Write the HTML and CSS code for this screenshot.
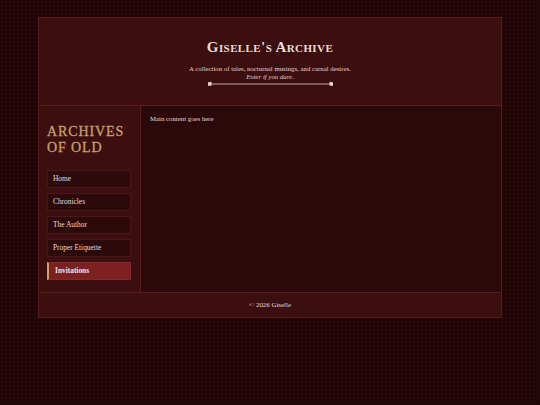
FILE: index.html
```
<!DOCTYPE html>
<html lang="en">
<head>
<meta charset="utf-8">
<title>Giselle's Archive</title>
<link rel="stylesheet" href="styles.css">
</head>
<body>
<div class="page">
  <header class="header">
    <h1 class="title">Giselle's Archive</h1>
    <p class="tagline">A collection of tales, nocturnal musings, and carnal desires.</p>
    <p class="dare">Enter if you dare.</p>
    <svg class="divider" width="127" height="6" viewBox="0 0 127 6" aria-hidden="true">
      <line x1="4" y1="3" x2="123" y2="3" stroke="#c7a9a2" stroke-width="1"/>
      <path d="M1 1.2 L3 1.2 L3.5 0.6 L4.5 1.2 L4.5 4.8 L1 4.8 Z" fill="#e6d3cc"/>
      <path d="M126 1.2 L124 1.2 L123.5 0.6 L122.5 1.2 L122.5 4.8 L126 4.8 Z" fill="#e6d3cc"/>
    </svg>
  </header>
  <div class="body">
    <aside class="sidebar">
      <h2 class="side-title">Archives of Old</h2>
      <nav class="nav">
        <a class="nav-item">Home</a>
        <a class="nav-item">Chronicles</a>
        <a class="nav-item">The Author</a>
        <a class="nav-item">Proper Etiquette</a>
        <a class="nav-item active">Invitations</a>
      </nav>
    </aside>
    <main class="main">
      <p class="main-text">Main content goes here</p>
    </main>
  </div>
  <footer class="footer">© 2026 Giselle</footer>
</div>
</body>
</html>
```
FILE: styles.css
```
html, body {
  margin: 0;
  padding: 0;
}
body {
  background-color: #1f0506;
  background-image: radial-gradient(circle, rgba(110, 25, 25, 0.28) 0.6px, transparent 0.9px);
  background-size: 4px 4px;
  font-family: "Liberation Serif", "DejaVu Serif", serif;
  color: #e9d9d2;
  height: 405px;
}
.page {
  width: 462px;
  margin: 17px 0 0 38px;
  border: 1px solid #5a1a1a;
  background: #3b0e0f;
}
.header {
  height: 88px;
  box-sizing: border-box;
  padding-top: 21px;
  text-align: center;
  border-bottom: 1px solid #5e1d1d;
  display: flex;
  flex-direction: column;
  align-items: center;
}
.title {
  margin: 0;
  font-size: 15px;
  line-height: 16px;
  font-weight: bold;
  font-variant: small-caps;
  letter-spacing: 0.4px;
  color: #ecdcd6;
}
.tagline {
  margin: 10px 0 0;
  font-size: 6.8px;
  line-height: 8px;
  color: #e6d4cd;
}
.dare {
  margin: 0;
  font-size: 6.8px;
  line-height: 8px;
  font-style: italic;
  color: #e0c9c2;
}
.divider {
  display: block;
  margin-top: 0px;
}
.body {
  display: flex;
  height: 186px;
  border-bottom: 1px solid #5e1d1d;
}
.sidebar {
  width: 102px;
  box-sizing: border-box;
  border-right: 1px solid #5e1d1d;
  padding: 18px 9px 0 8px;
  background: #3b0e0f;
}
.side-title {
  margin: 0;
  font-size: 14px;
  line-height: 16px;
  font-weight: normal;
  -webkit-text-stroke: 0.3px #c9a06a;
  text-transform: uppercase;
  letter-spacing: 0.9px;
  color: #c9a06a;
}
.nav {
  display: flex;
  flex-direction: column;
  gap: 5px;
  margin-top: 14px;
}
.nav-item {
  display: block;
  height: 18px;
  box-sizing: border-box;
  border: 1px solid #4d1616;
  background: #2c090a;
  padding-left: 5px;
  font-size: 7.4px;
  line-height: 16px;
  color: #eadad4;
}
.nav-item.active {
  background: #7c2021;
  border-color: #862728;
  border-left: 2px solid #d2a070;
  padding-left: 6px;
  font-weight: bold;
  color: #f1e2dc;
}
.main {
  flex: 1;
  background: #2b0809;
  padding: 9px 9px;
}
.main-text {
  margin: 0;
  font-size: 6.8px;
  line-height: 8px;
  color: #eadad3;
}
.footer {
  height: 24px;
  text-align: center;
  font-size: 6.9px;
  line-height: 24px;
  color: #eadad3;
  background: #3b0e0f;
}
```
